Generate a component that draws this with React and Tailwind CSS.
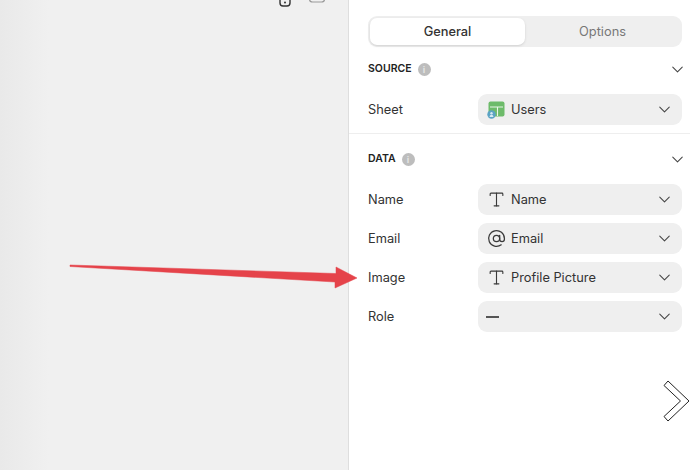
import React from 'react';
import { ChevronDown, Type, AtSign } from 'lucide-react';

const InfoDot = () => (
    <span className="w-[13px] h-[13px] rounded-full bg-[#bdbdbd] text-[#e4e4e4] text-[9px] font-bold flex items-center justify-center leading-none">i</span>
);

const SheetIcon = () => (
    <svg width="18" height="18" viewBox="0 0 18 18" className="shrink-0">
        <rect x="1.500" y="0.500" width="16" height="15" rx="2" fill="#6dbb6a" />
        <path d="M3 6h13M10.500 6v9" stroke="#e8f5e6" strokeWidth="1.100" fill="none" />
        <circle cx="4.500" cy="13.500" r="4.200" fill="#5ba3c4" />
        <circle cx="4.500" cy="12.300" r="1.200" fill="#d6e9f2" />
        <path d="M2.500 16c.3-1.600 1.100-2.200 2-2.200s1.700.6 2 2.200" fill="#d6e9f2" />
    </svg>
);

const Select = ({ icon, label }) => (
    <div className="w-[204px] h-[31px] rounded-[9px] bg-[#efefef] flex items-center pl-[9px] pr-[8px]">
        <span className="w-[18px] flex items-center justify-center shrink-0 text-[#3a3a3a]">{icon}</span>
        <span className="ml-[6px] flex-1 text-[12.800px] text-[#333]">{label}</span>
        <ChevronDown className="w-[19px] h-[19px] shrink-0 text-[#444]" strokeWidth={1.300} />
    </div>
);

const Row = ({ name, icon, label }) => (
    <div className="flex items-center justify-between">
        <span className="text-[12.800px] text-[#333]">{name}</span>
        <Select icon={icon} label={label} />
    </div>
);

const SectionHead = ({ title }) => (
    <div className="flex items-center justify-between h-[14px]">
        <div className="flex items-center gap-[6px]">
            <span className="text-[10.500px] font-semibold text-[#222]">{title}</span>
            <InfoDot />
        </div>
        <ChevronDown className="w-[19px] h-[19px] shrink-0 -mr-[5px] text-[#444]" strokeWidth={1.300} />
    </div>
);

const TextIcon = () => <Type className="w-[19px] h-[19px] shrink-0" strokeWidth={1.400} />;

export default function App() {
    return (
        <div className="relative w-[690px] h-[470px] overflow-hidden flex bg-white font-['Inter',sans-serif]">
            {/* Canvas */}
            <div className="w-[349px] h-full shrink-0 border-r border-[#dedede] bg-gradient-to-r from-[#e9e9e9] via-[#f0f0f0] via-[14%] to-[#f0f0f0]" />

            {/* Inspector */}
            <div className="flex-1 pl-[19px] pr-[8px] pt-[16px]">
                <div className="h-[31px] rounded-[9px] bg-[#efefef] p-[2px] flex">
                    <div className="w-[155px] rounded-[7px] bg-white shadow-sm flex items-center justify-center text-[12.800px] font-medium text-[#333]">General</div>
                    <div className="flex-1 flex items-center justify-center text-[12.800px] text-[#777]">Options</div>
                </div>
                <div className="mt-[15px]">
                    <SectionHead title="SOURCE" />
                </div>
                <div className="mt-[18px]">
                    <Row name="Sheet" icon={<SheetIcon />} label="Users" />
                </div>
                <div className="-ml-[19px] -mr-[8px] mt-[8px] border-t border-[#eeeeee]" />
                <div className="mt-[18px]">
                    <SectionHead title="DATA" />
                </div>
                <div className="mt-[18px] flex flex-col gap-[8px]">
                    <Row name="Name" icon={<TextIcon />} label="Name" />
                    <Row name="Email" icon={<AtSign className="w-[19px] h-[19px] shrink-0" strokeWidth={1.600} />} label="Email" />
                    <Row name="Image" icon={<TextIcon />} label="Profile Picture" />
                    <Row name="Role" icon={<span className="block w-[13px] h-[2px] shrink-0 bg-[#555] -ml-[8px]" />} label="" />
                </div>
            </div>

            {/* Cut-off toolbar icons at the top of the canvas */}
            <svg className="absolute left-[275px] top-0" width="55" height="8" viewBox="0 0 55 8" fill="none">
                <rect x="5" y="-6" width="10" height="12" rx="3" stroke="#333" strokeWidth="1.400" />
                <circle cx="10" cy="2.500" r="1" fill="#333" />
                <rect x="34.500" y="-8" width="15" height="10" rx="3" stroke="#999" strokeWidth="1.200" />
            </svg>

            {/* Red annotation arrow */}
            <svg className="absolute left-[65px] top-[258px]" width="300" height="40" viewBox="0 0 300 40">
                <path d="M5 7 L271 15.500 L271 9 L292 20 L270 30 L270 24 L5 8.500 Z" fill="#e5434a" stroke="#e5434a" strokeWidth="0.500" strokeLinejoin="round" />
            </svg>

            {/* Next chevron */}
            <svg className="absolute left-[660px] top-[378px]" width="30" height="46" viewBox="0 0 30 46" fill="none">
                <path d="M4 7.500 L8 3 L29 23 L8 43 L4 38.500 L20.500 23 Z" fill="#fff" stroke="#222" strokeWidth="1" />
            </svg>
        </div>
    );
}
